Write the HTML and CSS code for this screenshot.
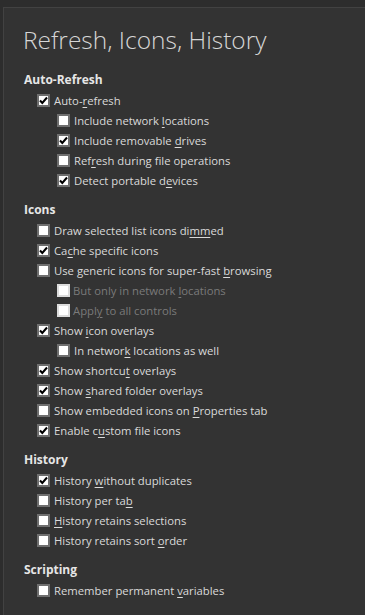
FILE: index.html
```html
<!DOCTYPE html>
<html lang="en">

<head>
  <meta charset="UTF-8">
  <title>Refresh, Icons, History</title>
  <link rel="stylesheet" href="styles.css">
</head>

<body>
  <div class="panel">
    <h1>Refresh, Icons, History</h1>

    <!-- Auto-Refresh -->
    <div class="section">
      <div class="heading">Auto-Refresh</div>
      <div class="row"><span class="box on"><svg viewBox="0 0 9 9"><polyline points="1,4.5 3.3,7 8,1.5" /></svg></span><span>Auto-<u>r</u>efresh</span></div>
      <div class="row sub"><span class="box"></span><span>Include network <u>l</u>ocations</span></div>
      <div class="row sub"><span class="box on"><svg viewBox="0 0 9 9"><polyline points="1,4.5 3.3,7 8,1.5" /></svg></span><span>Include removable <u>d</u>rives</span></div>
      <div class="row sub"><span class="box"></span><span>Ref<u>r</u>esh during file operations</span></div>
      <div class="row sub"><span class="box on"><svg viewBox="0 0 9 9"><polyline points="1,4.5 3.3,7 8,1.5" /></svg></span><span>Detect portable d<u>e</u>vices</span></div>
    </div>

    <!-- Icons -->
    <div class="section">
      <div class="heading">Icons</div>
      <div class="row"><span class="box"></span><span>Draw selected list icons di<u>mm</u>ed</span></div>
      <div class="row"><span class="box on"><svg viewBox="0 0 9 9"><polyline points="1,4.5 3.3,7 8,1.5" /></svg></span><span>Ca<u>c</u>he specific icons</span></div>
      <div class="row"><span class="box"></span><span>Use generic icons for super-fast <u>b</u>rowsing</span></div>
      <div class="row sub disabled"><span class="box"></span><span>But only in network <u>l</u>ocations</span></div>
      <div class="row sub disabled"><span class="box"></span><span>Appl<u>y</u> to all controls</span></div>
      <div class="row"><span class="box on"><svg viewBox="0 0 9 9"><polyline points="1,4.5 3.3,7 8,1.5" /></svg></span><span>Show <u>i</u>con overlays</span></div>
      <div class="row sub"><span class="box"></span><span>In networ<u>k</u> locations as well</span></div>
      <div class="row"><span class="box on"><svg viewBox="0 0 9 9"><polyline points="1,4.5 3.3,7 8,1.5" /></svg></span><span>Show shortcu<u>t</u> overlays</span></div>
      <div class="row"><span class="box on"><svg viewBox="0 0 9 9"><polyline points="1,4.5 3.3,7 8,1.5" /></svg></span><span>Show <u>s</u>hared folder overlays</span></div>
      <div class="row"><span class="box"></span><span>Show embedded icons on <u>P</u>roperties tab</span></div>
      <div class="row"><span class="box on"><svg viewBox="0 0 9 9"><polyline points="1,4.5 3.3,7 8,1.5" /></svg></span><span>Enable c<u>u</u>stom file icons</span></div>
    </div>

    <!-- History -->
    <div class="section">
      <div class="heading">History</div>
      <div class="row"><span class="box on"><svg viewBox="0 0 9 9"><polyline points="1,4.5 3.3,7 8,1.5" /></svg></span><span>History <u>w</u>ithout duplicates</span></div>
      <div class="row"><span class="box"></span><span>History per ta<u>b</u></span></div>
      <div class="row"><span class="box"></span><span><u>H</u>istory retains selections</span></div>
      <div class="row"><span class="box"></span><span>History retains sort <u>o</u>rder</span></div>
    </div>

    <!-- Scripting -->
    <div class="section last">
      <div class="heading">Scripting</div>
      <div class="row"><span class="box"></span><span>Remember permanent <u>v</u>ariables</span></div>
    </div>
  </div>
</body>

</html>
```

FILE: styles.css
```css
body {
  margin: 0;
  background-color: #2d2d2d;
  font-family: "Open Sans", "Noto Sans", sans-serif;
  font-size: 11.3px;
  color: #dadada;
  height: 615px;
  overflow: hidden;
}

.panel {
  margin: 7px 0 0 3px;
  height: 608px;
  box-sizing: border-box;
  border-top: 1px solid #424242;
  border-left: 1px solid #424242;
  background-color: #333333;
  padding: 14px 0 0 20px;
}

h1 {
  margin: 0 0 12px -1px;
  font-size: 24.5px;
  font-weight: 300;
  line-height: 36px;
  color: #d6d6d6;
}

.section {
  margin-bottom: 10px;
}

.heading {
  height: 20px;
  line-height: 20px;
  font-size: 12px;
  font-weight: bold;
  color: #e6e6e6;
}

.row {
  display: flex;
  align-items: center;
  height: 20px;
  padding-left: 13px;
  white-space: nowrap;
}

.row.sub {
  padding-left: 33px;
}

.row u {
  text-decoration-thickness: 1px;
  text-underline-offset: 2px;
}

.box {
  width: 13px;
  height: 13px;
  box-sizing: border-box;
  border: 2px solid #6f6f6f;
  background-color: #ffffff;
  margin-right: 4px;
  flex-shrink: 0;
  display: flex;
  align-items: center;
  justify-content: center;
}

.box svg {
  width: 9px;
  height: 9px;
  fill: none;
  stroke: #000000;
  stroke-width: 2;
}

.disabled {
  color: #7a7a7a;
}

.disabled .box {
  border-color: #dcdcdc;
  background-color: #ffffff;
  margin-right: 3px;
}
```
